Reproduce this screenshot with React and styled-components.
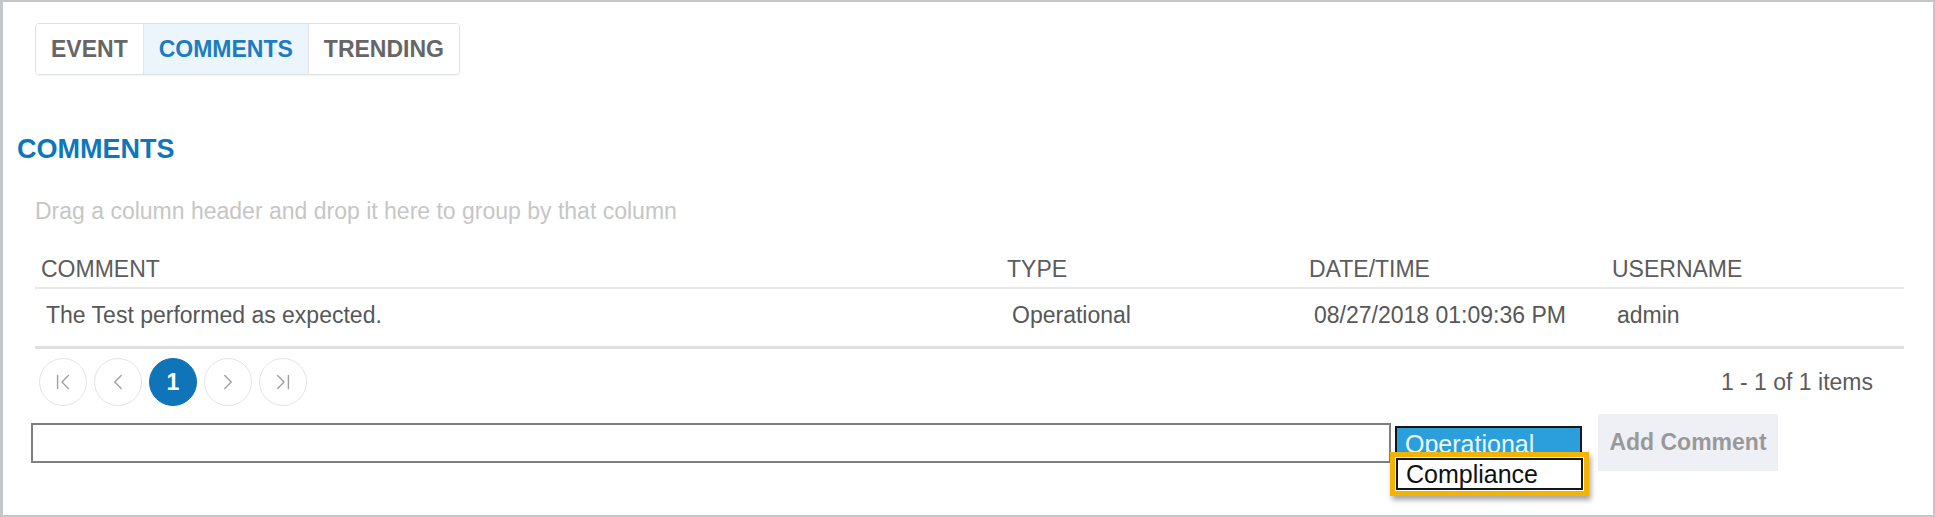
import React from 'react';
import styled, { createGlobalStyle } from 'styled-components';
import { ChevronFirst, ChevronLeft, ChevronRight, ChevronLast } from 'lucide-react';

const GlobalStyle = createGlobalStyle`
  body {
    margin: 0;
    background: #fff;
    font-family: 'Liberation Sans', Arial, sans-serif;
  }
`;

const Frame = styled.div`
  width: 1935px;
  height: 517px;
  box-sizing: border-box;
  border: 2px solid #c3c7c9;
  border-left-width: 3px;
  background: #fff;
  padding: 21px 29px 0 14px;
  overflow: hidden;
`;

const TabStrip = styled.div`
  display: flex;
  width: fit-content;
  margin-left: 18px;
  border: 1px solid #dde2e5;
  border-radius: 4px;
  box-shadow: 0 1px 1px rgba(0, 0, 0, 0.05);
  overflow: hidden;
`;

const Tab = styled.div`
  height: 50px;
  line-height: 50px;
  padding: 0 15px;
  font-size: 23px;
  font-weight: bold;
  color: ${(p) => (p.$active ? '#1b7dc0' : '#666')};
  background: ${(p) => (p.$active ? '#edf5fc' : '#fff')};
  & + & {
    border-left: 1px solid #e1e5e8;
  }
`;

const Title = styled.h2`
  margin: 58px 0 0;
  font-size: 27px;
  line-height: 32px;
  font-weight: bold;
  color: #0e77bb;
`;

const DragHint = styled.div`
  margin: 32px 0 0 18px;
  font-size: 23px;
  line-height: 28px;
  color: #c6c6c6;
`;

const Grid = styled.div`
  margin: 30px 0 0 18px;
`;

const GridRow = styled.div`
  display: grid;
  grid-template-columns: 966px 302px 303px 1fr;
  border-bottom: ${(p) => (p.$head ? '2px solid #e6e8ea' : '3px solid #dedfe0')};
  padding: ${(p) => (p.$head ? '0 0 4px' : '12px 0 17px')};
`;

const Cell = styled.div`
  font-size: 23px;
  line-height: 28px;
  padding-left: ${(p) => (p.$head ? '6px' : '11px')};
  color: ${(p) => (p.$head ? '#5c5c5c' : '#575757')};
  white-space: nowrap;
`;

const Pager = styled.div`
  display: flex;
  align-items: center;
  margin-top: 9px;
  padding: 0 31px 0 4px;
`;

const PageButton = styled.div`
  width: 48px;
  height: 48px;
  box-sizing: border-box;
  border-radius: 50%;
  border: 1px solid ${(p) => (p.$current ? '#0f74b8' : '#e4e4e4')};
  background: ${(p) => (p.$current ? '#0f74b8' : '#fff')};
  color: ${(p) => (p.$current ? '#fff' : '#a0a0a0')};
  display: flex;
  align-items: center;
  justify-content: center;
  font-size: 23px;
  font-weight: bold;
  & + & {
    margin-left: 7px;
  }
`;

const PageInfo = styled.div`
  margin-left: auto;
  font-size: 23px;
  color: #5c5c5c;
`;

const FormRow = styled.div`
  display: flex;
  align-items: center;
  margin-top: 8px;
`;

const CommentInput = styled.div`
  width: 1360px;
  height: 40px;
  box-sizing: border-box;
  margin-left: 14px;
  border: 2px solid #7f7f7f;
  background: #fff;
`;

const SelectWrap = styled.div`
  position: relative;
  width: 187px;
  height: 34px;
  margin-left: 4px;
`;

const SelectBox = styled.div`
  height: 34px;
  box-sizing: border-box;
  border: 2px solid #161616;
  background: #2a9fdb;
  color: #eef8ff;
  font-size: 25px;
  line-height: 32px;
  padding-left: 8px;
  overflow: hidden;
`;

const Highlight = styled.div`
  position: absolute;
  top: 26px;
  left: -5px;
  border: 5px solid #f2b400;
  padding: 1px;
  background: #fff;
  box-shadow: 2px 4px 5px rgba(0, 0, 0, 0.35);
`;

const Option = styled.div`
  width: 187px;
  box-sizing: border-box;
  border: 2px solid #161616;
  background: #fff;
  color: #111;
  font-size: 25px;
  line-height: 28px;
  padding-left: 8px;
`;

const AddButton = styled.div`
  width: 180px;
  height: 57px;
  margin-left: 16px;
  background: #eef0f5;
  color: #999;
  font-size: 23px;
  font-weight: bold;
  display: flex;
  align-items: center;
  justify-content: center;
`;

const columns = ['COMMENT', 'TYPE', 'DATE/TIME', 'USERNAME'];
const rows = [
  ['The Test performed as expected.', 'Operational', '08/27/2018 01:09:36 PM', 'admin'],
];

const iconProps = { size: 26, strokeWidth: 1.3 };

export default function App() {
  return (
    <>
      <GlobalStyle />
      <Frame>
        <TabStrip>
          <Tab>EVENT</Tab>
          <Tab $active>COMMENTS</Tab>
          <Tab>TRENDING</Tab>
        </TabStrip>

        <Title>COMMENTS</Title>
        <DragHint>Drag a column header and drop it here to group by that column</DragHint>

        <Grid>
          <GridRow $head>
            {columns.map((c) => (
              <Cell $head key={c}>{c}</Cell>
            ))}
          </GridRow>
          {rows.map((r, i) => (
            <GridRow key={i}>
              {r.map((v, j) => (
                <Cell key={j}>{v}</Cell>
              ))}
            </GridRow>
          ))}
          <Pager>
            <PageButton><ChevronFirst {...iconProps} /></PageButton>
            <PageButton><ChevronLeft {...iconProps} /></PageButton>
            <PageButton $current>1</PageButton>
            <PageButton><ChevronRight {...iconProps} /></PageButton>
            <PageButton><ChevronLast {...iconProps} /></PageButton>
            <PageInfo>1 - 1 of 1 items</PageInfo>
          </Pager>
        </Grid>

        <FormRow>
          <CommentInput />
          <SelectWrap>
            <SelectBox>Operational</SelectBox>
            <Highlight>
              <Option>Compliance</Option>
            </Highlight>
          </SelectWrap>
          <AddButton>Add Comment</AddButton>
        </FormRow>
      </Frame>
    </>
  );
}
